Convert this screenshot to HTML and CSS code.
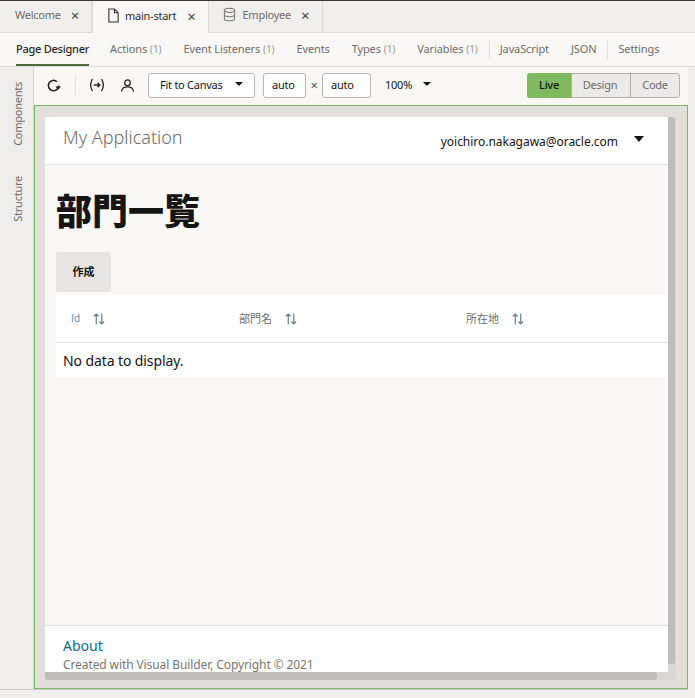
FILE: index.html
```html
<!DOCTYPE html>
<html>
<head>
    <title>Visual Builder - main-start</title>
    <link rel="stylesheet" href="styles.css">
</head>
<body>
    <div class="tabs">
        <div class="tab">Welcome <span class="close">×</span></div>
        <div class="tab active">
            <svg class="tab-icon" viewBox="0 0 14 16"><path d="M2 1h6l4 4v10H2zM8 1v4h4" fill="none" stroke="#333" stroke-width="1.2"/></svg>
            main-start <span class="close">×</span>
        </div>
        <div class="tab">
            <svg class="tab-icon" viewBox="0 0 14 16"><ellipse cx="7" cy="3.5" rx="5.5" ry="2.3" fill="none" stroke="#777" stroke-width="1.1"/><path d="M1.5 3.5v9c0 1.3 2.5 2.3 5.5 2.3s5.500-1 5.500-2.300v-9M1.500 8c0 1.300 2.500 2.300 5.500 2.300s5.500-1 5.500-2.300" fill="none" stroke="#777" stroke-width="1.1"/></svg>
            Employee <span class="close">×</span>
        </div>
    </div>

    <div class="subnav">
        <a class="active">Page Designer</a>
        <a>Actions <small>(1)</small></a>
        <a>Event Listeners <small>(1)</small></a>
        <a>Events</a>
        <a>Types <small>(1)</small></a>
        <a>Variables <small>(1)</small></a>
        <span class="divider"></span>
        <a>JavaScript</a>
        <a>JSON</a>
        <span class="divider"></span>
        <a>Settings</a>
    </div>

    <div class="workspace">
        <div class="rail">
            <span>Components</span>
            <span>Structure</span>
        </div>
        <div class="designer">
            <div class="toolbar">
                <svg class="tool" viewBox="0 0 16 16"><path d="M13.500 8a5.500 5.500 0 1 1-1.800-4" fill="none" stroke="#222" stroke-width="1.700"/><path d="M10 9h6l-3 3.500z" fill="#222"/></svg>
                <span class="tool-sep"></span>
                <svg class="tool var" viewBox="0 0 16 16"><path d="M3.500 2C1 6 1 10 3.500 14M12.500 2C15 6 15 10 12.500 14" fill="none" stroke="#222" stroke-width="1.300"/><path d="M4.800 8h6M8.600 5.800L10.800 8l-2.200 2.200" fill="none" stroke="#222" stroke-width="1.300"/></svg>
                <svg class="tool user" viewBox="0 0 16 16"><circle cx="8" cy="5" r="3" fill="none" stroke="#222" stroke-width="1.300"/><path d="M1.500 14.500c.5-3.500 3.500-5 6.500-5s6 1.500 6.500 5" fill="none" stroke="#222" stroke-width="1.300"/></svg>
                <div class="select">Fit to Canvas <i class="caret"></i></div>
                <div class="size">auto</div>
                <span class="times">×</span>
                <div class="size wide">auto</div>
                <div class="zoom-level">100% <i class="caret"></i></div>
                <div class="modes">
                    <span class="mode on">Live</span>
                    <span class="mode design">Design</span>
                    <span class="mode code">Code</span>
                </div>
            </div>
            <div class="canvas">
                <div class="canvas-top">
                    <div class="page">
                        <header class="app-header">
                            <span class="app-title">My Application</span>
                            <span class="user-name">yoichiro.nakagawa@oracle.com</span>
                            <i class="caret big"></i>
                        </header>
                        <main class="content">
                            <h1>部門一覧</h1>
                            <button class="create">作成</button>
                            <div class="table">
                                <div class="thead">
                                    <div class="th col-id"><span class="id-label">Id</span><svg class="sort" viewBox="0 0 11 11"><path d="M3 10.500V1M.8 3.200L3 1l2.200 2.200M8 .5V10M5.800 7.800L8 10l2.200-2.200" fill="none" stroke="#6a7f8c" stroke-width="1.100"/></svg></div>
                                    <div class="th col-name">部門名<svg class="sort" viewBox="0 0 11 11"><path d="M3 10.500V1M.8 3.200L3 1l2.200 2.200M8 .5V10M5.800 7.800L8 10l2.200-2.200" fill="none" stroke="#6a7f8c" stroke-width="1.100"/></svg></div>
                                    <div class="th">所在地<svg class="sort" viewBox="0 0 11 11"><path d="M3 10.500V1M.8 3.200L3 1l2.200 2.200M8 .5V10M5.800 7.800L8 10l2.200-2.200" fill="none" stroke="#6a7f8c" stroke-width="1.100"/></svg></div>
                                </div>
                                <div class="empty">No data to display.</div>
                            </div>
                        </main>
                        <footer class="app-footer">
                            <a>About</a>
                            <p>Created with Visual Builder, Copyright © 2021</p>
                        </footer>
                    </div>
                    <div class="vscroll"><div class="thumb"></div></div>
                </div>
                <div class="hscroll"><div class="thumb"></div></div>
            </div>
        </div>
    </div>
</body>
</html>
```

FILE: styles.css
```css
* {
    box-sizing: border-box;
}

html,
body {
    height: 100%;
}

body {
    margin: 0;
    height: 698px;
    overflow: hidden;
    display: flex;
    flex-direction: column;
    background-color: #efeeec;
    border-top: 1px solid #3a3a3a;
    font-family: "Noto Sans", "Noto Sans CJK JP", sans-serif;
    font-size: 11px;
    letter-spacing: -0.25px;
    color: #161513;
}

/* top tabs */
.tabs {
    display: flex;
    height: 32px;
    background-color: #f1efed;
    border-bottom: 1px solid #dedcd9;
}

.tab {
    display: flex;
    align-items: center;
    padding: 0 12px 4px 15px;
    border-right: 1px solid #dedcd9;
    color: #6f6c68;
}

.tab.active {
    height: 32px;
    padding: 0 13px 4px 14px;
    background-color: #faf8f6;
    border-left: 1px solid #dedcd9;
    color: #2f2d2a;
    border-right: 1px solid #dedcd9;
}

.tab.active + .tab {
    padding: 0 13px 4px 14px;
}

.tab-icon {
    width: 13px;
    height: 15px;
    margin-right: 6px;
}

.tab.active .tab-icon {
    margin-right: 5px;
}

.close {
    margin-left: 10px;
    font-size: 15px;
    line-height: 1;
    color: #444;
    padding-top: 2px;
}

.tab.active .close {
    margin-left: 11px;
}

/* second row */
.subnav {
    display: flex;
    align-items: center;
    height: 34px;
    padding-left: 16px;
    background-color: #faf8f6;
    border-bottom: 1px solid #dedcd9;
    color: #6f6c68;
    letter-spacing: -0.12px;
}

.subnav a {
    display: flex;
    align-items: center;
    gap: 3px;
    height: 33px;
    padding-bottom: 2px;
    margin-right: 22px;
}

.subnav a.active {
    margin-right: 21px;
    color: #2a2825;
    font-weight: 500;
    letter-spacing: -0.25px;
    box-shadow: inset 0 -2px 0 #4f6a3c;
}

.subnav small {
    font-size: 10px;
    color: #9a9793;
}

.divider {
    width: 1px;
    height: 18px;
    margin: 0 10px 0 -11px;
    background-color: #dedcd9;
}

/* main part */
.workspace {
    display: flex;
    flex: 1;
    min-height: 0;
}

.rail {
    width: 34px;
    height: 623px;
    border-right: 1px solid #d5d3d0;
    border-bottom: 1px solid #c9c7c4;
    display: flex;
    flex-direction: column;
    align-items: center;
    gap: 30px;
    padding: 15px 0 0 2px;
    color: #6f6c68;
}

.rail span {
    writing-mode: vertical-rl;
    transform: rotate(180deg);
}

.designer {
    width: 654px;
    height: 623px;
    display: flex;
    flex-direction: column;
    background-color: #faf8f6;
    border-bottom: 1px solid #c9c7c4;
}

.toolbar {
    display: flex;
    align-items: center;
    height: 38px;
    padding: 0 0 2px 12px;
    flex-shrink: 0;
}

.tool {
    width: 15px;
    height: 15px;
}

.tool-sep {
    width: 1px;
    height: 20px;
    margin: 0 13px 0 14px;
    background-color: #e2e0dd;
}

.tool.var {
    width: 16px;
    height: 16px;
    margin-right: 15px;
}

.tool.user {
    margin-right: 13px;
}

.select {
    display: flex;
    align-items: center;
    justify-content: space-between;
    width: 107px;
    height: 25px;
    padding: 0 11px 2px;
    background-color: #fff;
    border: 1px solid #b9b7b3;
    border-radius: 3px;
}

.size {
    display: flex;
    align-items: center;
    width: 43px;
    height: 25px;
    padding: 0 0 2px 8px;
    background-color: #fff;
    border: 1px solid #b9b7b3;
    border-radius: 3px;
}

.size.wide {
    width: 49px;
}

.select + .size {
    margin-left: 8px;
}

.times {
    width: 16px;
    text-align: center;
    color: #555;
    font-size: 13px;
}

.zoom-level {
    display: flex;
    align-items: center;
    gap: 11px;
    margin-left: 14px;
    padding-bottom: 2px;
}

.caret {
    width: 0;
    height: 0;
    border-left: 4px solid transparent;
    border-right: 4px solid transparent;
    border-top: 4px solid #161513;
}

.modes {
    display: flex;
    height: 25px;
    margin-left: auto;
    margin-right: 8px;
    border: 1px solid #b1afab;
    border-radius: 3px;
    background-color: #eceae8;
    color: #6f6c68;
}

.mode {
    display: flex;
    align-items: center;
    justify-content: center;
    padding-bottom: 2px;
}

.mode.design {
    width: 60px;
    padding-right: 2px;
    border-left: 1px solid #b1afab;
    border-right: 1px solid #b1afab;
}

.mode.code {
    width: 48px;
}

.mode.on {
    width: 44px;
    margin: -1px 0 -1px -1px;
    background-color: #7fbb5e;
    color: #161513;
    border-radius: 3px 0 0 3px;
    font-weight: 500;
}

/* preview area */
.canvas {
    flex: 1;
    min-height: 0;
    display: flex;
    flex-direction: column;
    padding: 11px 10px 5px 10px;
    background-color: #e2dfda;
    border: 1px solid #7fbb5e;
}

.canvas-top {
    display: flex;
    height: 555px;
}

.page {
    width: 623px;
    display: flex;
    flex-direction: column;
    overflow: hidden;
    background-color: #f9f8f6;
}

.app-header {
    display: flex;
    align-items: center;
    flex-shrink: 0;
    height: 48px;
    padding: 0 24px 8px 18px;
    background-color: #fff;
    border-bottom: 1px solid #e4e2df;
}

.app-title {
    font-size: 18px;
    font-weight: 300;
    letter-spacing: 0;
    color: #6f6c68;
}

.user-name {
    margin-left: auto;
    margin-right: 16px;
    font-size: 12px;
    letter-spacing: -0.03px;
    padding-top: 10px;
}

.caret.big {
    margin-top: 4px;
    border-left-width: 5px;
    border-right-width: 5px;
    border-top-width: 6px;
}

.content {
    flex: 1;
    padding-left: 11px;
}

h1 {
    margin: 24px 0 0 0;
    height: 63px;
    font-size: 36px;
    line-height: 40px;
    font-weight: 900;
    letter-spacing: 0;
    font-family: "Noto Sans CJK JP", sans-serif;
}

.create {
    display: block;
    width: 55px;
    height: 40px;
    padding: 0 0 2px;
    border: none;
    border-radius: 3px;
    background-color: #e7e5e3;
    font-family: "Noto Sans CJK JP", sans-serif;
    font-size: 11px;
    font-weight: 700;
    color: #161513;
}

.table {
    margin-top: 3px;
    background-color: #fff;
}

.thead {
    display: flex;
    align-items: center;
    height: 48px;
    padding: 0 0 2px 15px;
    border-bottom: 1px solid #e4e2df;
    color: #6f6c68;
    letter-spacing: 0;
    font-family: "Noto Sans CJK JP", sans-serif;
}

.th {
    display: flex;
    align-items: center;
}

.col-id {
    width: 168px;
}

.col-name {
    width: 227px;
}

.id-label {
    font-size: 10px;
    color: #5f8fb0;
}

.sort {
    width: 12px;
    height: 12px;
    margin: 2px 0 0 13px;
}

.empty {
    height: 34px;
    padding-left: 7px;
    font-size: 14px;
    line-height: 36px;
    letter-spacing: -0.1px;
}

.app-footer {
    flex-shrink: 0;
    height: 47px;
    padding: 11px 0 0 18px;
    background-color: #fff;
    border-top: 1px solid #e4e2df;
}

.app-footer a {
    display: block;
    font-size: 14px;
    line-height: 18px;
    letter-spacing: 0;
    color: #04708e;
}

.app-footer p {
    margin: 0;
    font-size: 12px;
    line-height: 19px;
    letter-spacing: -0.1px;
    color: #7a7773;
}

.vscroll {
    width: 8px;
    background-color: #d9d7d2;
}

.vscroll .thumb {
    width: 7px;
    height: 547px;
    border-radius: 0 3px 3px 0;
    background-color: #bfbdb8;
}

.hscroll {
    width: 631px;
    height: 8px;
    background-color: #d9d7d2;
    border-radius: 0 0 3px 3px;
}

.hscroll .thumb {
    width: 612px;
    height: 8px;
    border-radius: 0 3px 3px 3px;
    background-color: #bfbdb8;
}
```
